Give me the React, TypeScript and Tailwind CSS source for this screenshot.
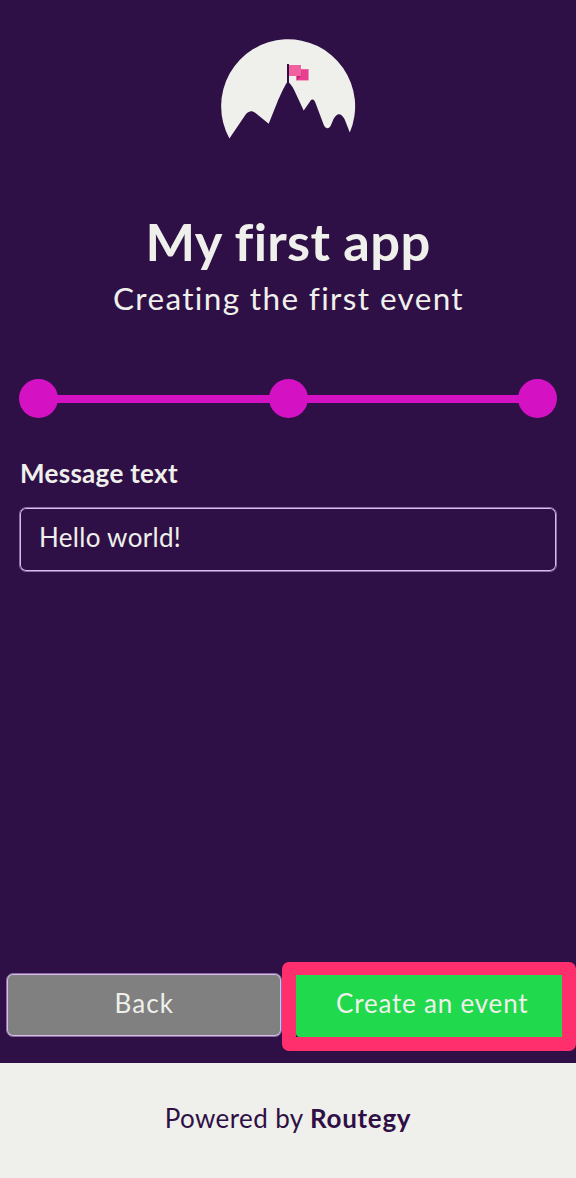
const steps = [1, 2, 3];

function Logo() {
  return (
    <svg className="h-[102px] w-[136px]" viewBox="220 38 136 102" aria-hidden="true">
      <path
        fill="#eff0eb"
        d="M229.4 138.5A67 67 0 1 1 349.8 132.5L344.5 119C341 112.5 337 112.5 333.5 119L331 125C329 129.3 326 129.3 323.8 125L315.5 103C314 99 312 98.5 310 101.5L303.7 110.5L296 94C294 89 291.5 85 289 82.5V64H287V82.5C284.5 86 280 95.5 277 103L268.7 123.8L255.5 113C252 110.5 249.5 110.5 246 114Z"
      />
      <path fill="#f1609f" d="M296 69h12.7v11.5H296z" />
      <path fill="#e83e92" d="M297 70h11v10h-11z" />
      <path fill="#f1609f" d="M289 65h12v11h-12z" />
      <path fill="#b92770" d="M297 76h4l-4 4z" />
    </svg>
  );
}

function Stepper() {
  return (
    <div className="mt-[61px] flex items-center px-[19px]">
      {steps.map((step, index) => (
        <div key={step} className={index === 0 ? "flex items-center" : "flex flex-1 items-center"}>
          {index > 0 && <div className="-mx-px h-2 flex-1 bg-[#d511c4]" />}
          <div className="size-[39px] shrink-0 rounded-full bg-[#d511c4]" />
        </div>
      ))}
    </div>
  );
}

export default function App() {
  return (
    <div className="flex h-[1178px] w-[576px] flex-col overflow-hidden bg-[#2f1046] font-['Lato',sans-serif] text-[26px] text-[#eff0eb] [font-variant-ligatures:none]">
      <header className="flex flex-col items-center pt-[38px] whitespace-nowrap">
        <Logo />
        <h1 className="mt-[71px] text-[52.5px] leading-[60px] font-bold tracking-[0.3px]">My first app</h1>
        <h2 className="mt-[7px] pl-px text-[31.5px] leading-10 font-normal tracking-[1.35px]">Creating the first event</h2>
      </header>
      <Stepper />
      <main className="flex flex-1 flex-col px-[19px] pt-[39px]">
        <label htmlFor="message" className="self-start pl-px leading-8 font-bold tracking-[0.3px]">Message text</label>
        <input
          id="message"
          defaultValue="Hello world!"
          className="mt-[18px] h-[65px] w-full rounded-[7px] border border-[#8a6ca0] bg-transparent px-[19px] pb-[5px] tracking-[0.3px] shadow-[inset_0_0_0_1px_#d9bdec] outline-none"
        />
      </main>
      <div className="flex h-[101px] items-start">
        <button className="mt-[11px] ml-[6px] h-16 w-[275.5px] rounded-[7px] border border-[#8a6ca0] bg-[#808080] pb-1 pl-px tracking-[1.1px] shadow-[inset_0_0_0_1px_#d9bdec]">Back</button>
        <div className="h-[89px] w-[294.5px] rounded-[7px] bg-[#ff2e6c] px-[14px] pt-[13px]">
          <div className="h-[62px] bg-[#2f1046]">
            <button className="h-full w-full rounded-bl-[4px] bg-[#20d94c] pb-[6px] pl-[7px] tracking-[0.8px] whitespace-nowrap">Create an event</button>
          </div>
        </div>
      </div>
      <footer className="flex h-[115px] items-center justify-center bg-[#eff0eb] pb-1 whitespace-pre text-[#2f1046]">
        <span className="tracking-[0.4px]">Powered by </span>
        <strong className="font-bold tracking-[0.7px]">Routegy</strong>
      </footer>
    </div>
  );
}
